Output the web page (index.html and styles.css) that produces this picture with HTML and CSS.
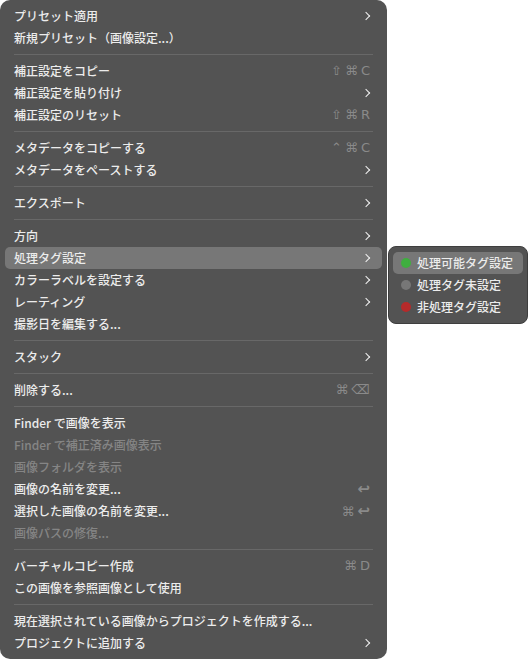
FILE: index.html
```html
<!DOCTYPE html>
<html lang="ja">
<head>
    <meta charset="UTF-8">
    <meta name="viewport" content="width=device-width, initial-scale=1.0">
    <title>コンテキストメニュー</title>
    <link rel="stylesheet" href="styles.css">
</head>
<body>
    <div class="menu">
        <div class="item">プリセット適用<span class="chev"></span></div>
        <div class="item">新規プリセット（画像設定...）</div>
        <div class="sep"></div>
        <div class="item">補正設定をコピー<span class="key">⇧⌘C</span></div>
        <div class="item">補正設定を貼り付け<span class="chev"></span></div>
        <div class="item">補正設定のリセット<span class="key">⇧⌘R</span></div>
        <div class="sep"></div>
        <div class="item">メタデータをコピーする<span class="key">⌃⌘C</span></div>
        <div class="item">メタデータをペーストする<span class="chev"></span></div>
        <div class="sep"></div>
        <div class="item">エクスポート<span class="chev"></span></div>
        <div class="sep"></div>
        <div class="item">方向<span class="chev"></span></div>
        <div class="item active">処理タグ設定<span class="chev"></span></div>
        <div class="item">カラーラベルを設定する<span class="chev"></span></div>
        <div class="item">レーティング<span class="chev"></span></div>
        <div class="item">撮影日を編集する...</div>
        <div class="sep"></div>
        <div class="item">スタック<span class="chev"></span></div>
        <div class="sep"></div>
        <div class="item">削除する...<span class="key">⌘⌫</span></div>
        <div class="sep"></div>
        <div class="item">Finder で画像を表示</div>
        <div class="item disabled">Finder で補正済み画像表示</div>
        <div class="item disabled">画像フォルダを表示</div>
        <div class="item">画像の名前を変更...<span class="key"><span class="ret">↩</span></span></div>
        <div class="item">選択した画像の名前を変更...<span class="key">⌘<span class="ret">↩</span></span></div>
        <div class="item disabled">画像パスの修復...</div>
        <div class="sep"></div>
        <div class="item">バーチャルコピー作成<span class="key">⌘D</span></div>
        <div class="item">この画像を参照画像として使用</div>
        <div class="sep"></div>
        <div class="item">現在選択されている画像からプロジェクトを作成する...</div>
        <div class="item">プロジェクトに追加する<span class="chev"></span></div>
    </div>

    <div class="submenu">
        <div class="item active"><span class="dot green"></span>処理可能タグ設定</div>
        <div class="item"><span class="dot grey"></span>処理タグ未設定</div>
        <div class="item"><span class="dot red"></span>非処理タグ設定</div>
    </div>
</body>
</html>
```

FILE: styles.css
```css
body {
    margin: 0;
    background: #ffffff;
    font-family: "Noto Sans CJK JP", "Noto Sans", sans-serif;
    font-size: 12px;
    font-weight: 500;
    color: #ececec;
    position: relative;
    width: 529px;
    height: 659px;
    overflow: hidden;
}
.menu {
    width: 387px;
    height: 659px;
    box-sizing: border-box;
    padding: 5px 0;
    background: #535353;
    border-radius: 10px;
}
.item {
    display: flex;
    align-items: center;
    height: 22px;
    margin: 0 5px;
    padding: 0 11px 0 9px;
    border-radius: 5px;
    white-space: nowrap;
    line-height: 22px;
}
.item.active {
    background: #777777;
}
.item.disabled {
    color: #858585;
}
.sep {
    height: 1px;
    margin: 5px 14px;
    background: #686868;
}
.key {
    margin-left: auto;
    font-family: "DejaVu Sans", "Liberation Sans", sans-serif;
    font-size: 13px;
    font-weight: normal;
    color: #8a8a8a;
    letter-spacing: 3px;
    margin-right: -2px;
}
.ret {
    font-size: 15px;
    font-weight: bold;
}
.chev {
    margin-left: auto;
    width: 5px;
    height: 5px;
    border-right: 1.7px solid #f2f2f2;
    border-top: 1.7px solid #f2f2f2;
    transform: rotate(45deg);
    margin-right: 2px;
}
.submenu {
    position: absolute;
    left: 388px;
    top: 246px;
    width: 140px;
    box-sizing: border-box;
    padding: 5px 0;
    background: #535353;
    border: 1px solid #3e3e3e;
    border-radius: 8px;
}
.submenu .item {
    margin: 0 4px;
    padding: 0 8px;
}
.dot {
    width: 10px;
    height: 10px;
    border-radius: 50%;
    margin-right: 6px;
    flex: none;
}
.dot.green {
    background: #3fae3f;
}
.dot.grey {
    background: #777777;
}
.dot.red {
    background: #b52a2a;
}
```
